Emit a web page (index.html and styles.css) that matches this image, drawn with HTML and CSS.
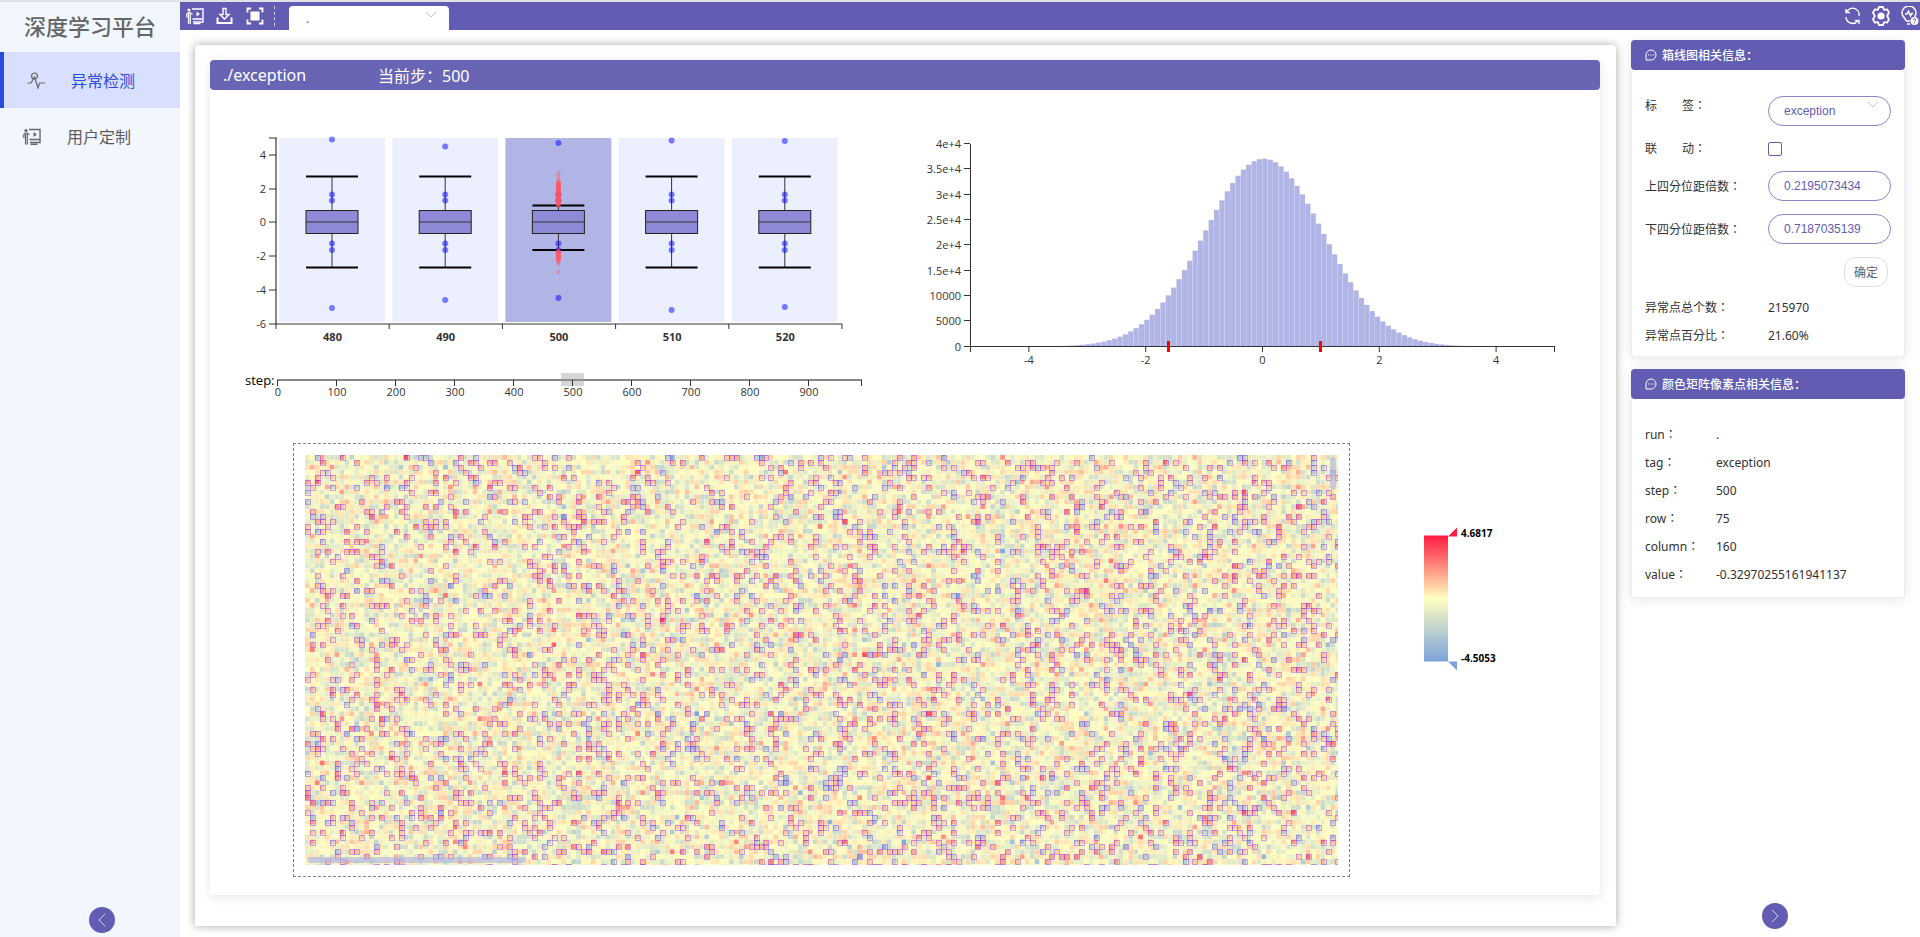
FILE: index.html
```html
<!DOCTYPE html>
<html lang="zh-CN">
<head>
<meta charset="utf-8">
<title>深度学习平台</title>
<link rel="stylesheet" href="styles.css">
</head>
<body>
<svg width="0" height="0" class="defs" aria-hidden="true">
  <symbol id="i-board" viewBox="0 0 18 17" fill="none" stroke="currentColor">
    <circle cx="3" cy="2.500" r="1.600" fill="currentColor" stroke="none"/>
    <path d="M0.800 10V6.500L2.500 5H4l2.500 1.800M2.500 5v11.500M4.300 5v11.500" stroke-width="1.200"/>
    <path d="M6 1.500h11v13H7" stroke-width="1.400"/>
    <path d="M10.500 4v5l3.500-2.500z" fill="currentColor" stroke="none"/>
    <path d="M6.500 11.500h10M7.500 16.200h7" stroke-width="1.400"/>
  </symbol>
  <symbol id="i-comment" viewBox="0 0 12 12" fill="none" stroke="currentColor">
    <path d="M1 11V6a5 5 0 1 1 5 5z"/>
    <path d="M3 6h1.200M5.400 6h1.200M7.800 6h1.200" stroke-width="1.200"/>
  </symbol>
  <symbol id="i-down" viewBox="0 0 12 8" fill="none" stroke="currentColor"><path d="M1 1l5 5 5-5"/></symbol>
</svg>
<div class="app">
  <aside class="sidebar">
    <h1 class="brand">深度学习平台</h1>
    <nav class="menu">
      <a class="menu-item active" href="#detect">
        <svg class="menu-icon" viewBox="0 0 18 17" fill="none" stroke="currentColor" stroke-width="1.200"><circle cx="7.500" cy="4" r="3"/><path d="M0.500 11h3.500l3.500-6 3.500 11 1.500-5H18"/></svg>
        <span>异常检测</span>
      </a>
      <a class="menu-item" href="#custom">
        <svg class="menu-icon"><use href="#i-board"/></svg>
        <span>用户定制</span>
      </a>
    </nav>
    <button class="round" aria-label="收起菜单"><svg viewBox="0 0 26 26"><path d="M16 7l-6 6 6 6"/></svg></button>
  </aside>
  <div class="page">
    <header class="topbar">
      <button class="tool" aria-label="演示"><svg viewBox="0 0 18 17"><use href="#i-board"/></svg></button>
      <button class="tool" aria-label="下载"><svg viewBox="0 0 18 17" fill="none" stroke="currentColor" stroke-width="2"><path d="M1.500 10v5.500h14V10"/><path d="M7 1h3v6h3l-4.500 4.500L4 7h3z" stroke-width="1.400"/></svg></button>
      <button class="tool" aria-label="全屏"><svg viewBox="0 0 18 17" fill="none" stroke="currentColor" stroke-width="1.800"><path d="M1.500 5V1H5M13 1h3.500v4M16.500 12v4H13M5 16H1.500v-4"/><rect x="4.500" y="4" width="9" height="9" fill="currentColor" stroke="none"/></svg></button>
      <span class="divider"></span>
      <div class="run-wrap"><select class="run" aria-label="run"><option>.</option></select><svg class="chev"><use href="#i-down"/></svg></div>
      <div class="spacer"></div>
      <button class="tool right" aria-label="刷新"><svg viewBox="0 0 20 20" fill="none" stroke="currentColor" stroke-width="1.400"><path d="M5 5.500A6.500 6.500 0 0 1 17 10M15.500 15A6.500 6.500 0 0 1 4 11M4 3v3.500h4M17 18v-3.500h-4"/></svg></button>
      <button class="tool right" aria-label="设置"><svg viewBox="0 0 20 20" fill="none" stroke="currentColor" stroke-width="1.800" stroke-linejoin="round"><path d="M8 1h4l1 2.800 3-.5 2 3.200-1.800 3.500 1.800 3.500-2 3.200-3-.5L12 19H8l-1-2.800-3 .5-2-3.200L3.800 10 2 6.500l2-3.200 3 .5z"/><circle cx="10" cy="10" r="3.600" fill="currentColor" stroke="none"/></svg></button>
      <button class="tool right" aria-label="帮助"><svg viewBox="0 0 20 20" fill="none" stroke="currentColor" stroke-width="1.500"><path d="M6 15c0-3-4-3.500-4-8a7 7 0 0 1 14 0c0 2-.8 3-1.500 4M6 15h4M7 18h3"/><path d="M5 8h2l1.500-3 2 5 1.200-2.500h1.500"/><circle cx="14.500" cy="15" r="4" fill="currentColor" stroke="none"/><path d="M13.300 13.800c0-1.600 2.600-1.500 2.400 0-.1.800-1.200.8-1.200 1.800M14.500 16.400v1" stroke="#625db2" stroke-width="1"/></svg></button>
    </header>
    <div class="body">
      <main class="panel">
        <section class="card board">
          <div class="board-head"><span class="path">./exception</span><span>当前步：500</span></div>
          <div class="charts">
            <svg id="box" viewBox="210 90 695 320"></svg>
            <svg id="hist" viewBox="905 90 695 320"></svg>
          </div>
          <div class="matrix-row">
            <div class="matrix">
              <canvas id="matrix" width="1033" height="410"></canvas>
              <span class="bar-v"></span><span class="bar-h"></span>
            </div>
            <svg class="legend" viewBox="1350 443 250 433">
              <defs><linearGradient id="ramp" x1="0" y1="0" x2="0" y2="1"><stop offset="0" stop-color="#ff1a41"/><stop offset=".5" stop-color="#ffffbf"/><stop offset="1" stop-color="#7ba3dc"/></linearGradient></defs>
              <rect x="1424" y="535" width="24" height="126" fill="url(#ramp)"/>
              <path d="M1448 536l9-9v9z" fill="#ff1a41"/><path d="M1448 661h9v9z" fill="#7ba3dc"/>
              <text x="1461" y="536">4.6817</text><text x="1461" y="661">-4.5053</text>
            </svg>
          </div>
        </section>
      </main>
      <aside class="info">
        <section class="card">
          <h2><svg><use href="#i-comment"/></svg>箱线图相关信息：</h2>
          <form class="form">
            <label class="top" for="tag">标<i></i>签：</label>
            <div class="pill-wrap"><select id="tag" class="pill"><option>exception</option></select><svg class="chev"><use href="#i-down"/></svg></div>
            <label for="link">联<i></i>动：</label><input id="link" type="checkbox" class="check">
            <label for="upper">上四分位距倍数：</label><input id="upper" class="pill" value="0.2195073434">
            <label for="lower">下四分位距倍数：</label><input id="lower" class="pill" value="0.7187035139">
            <button type="button" class="ok">确定</button>
          </form>
          <dl class="stats"><dt>异常点总个数：</dt><dd>215970</dd><dt>异常点百分比：</dt><dd>21.60%</dd></dl>
        </section>
        <section class="card">
          <h2><svg><use href="#i-comment"/></svg>颜色矩阵像素点相关信息：</h2>
          <dl class="pixel"><dt>run：</dt><dd>.</dd><dt>tag：</dt><dd>exception</dd><dt>step：</dt><dd>500</dd><dt>row：</dt><dd>75</dd><dt>column：</dt><dd>160</dd><dt>value：</dt><dd>-0.32970255161941137</dd></dl>
        </section>
        <button class="round" aria-label="收起信息"><svg viewBox="0 0 26 26"><path d="M10 7l6 6-6 6"/></svg></button>
      </aside>
    </div>
  </div>
</div>
<script src="charts.js"></script>
</body>
</html>
```

FILE: styles.css
```css
* { box-sizing: border-box; }
body { margin: 0; font-family: "Noto Sans", "Noto Sans CJK SC", sans-serif; font-size: 12px; color: #303133; background: #fff; }
button, select, input { font: inherit; margin: 0; padding: 0; border: 0; background: none; color: inherit; }
select { appearance: none; }
.defs { position: absolute; }
.app { display: flex; min-height: 100vh; border-top: 2px solid #e2e2e4; }
.sidebar { flex: 0 0 180px; display: flex; flex-direction: column; background: #f2f7ff; color: #5c5c5c; }
.brand { margin: 0; height: 50px; line-height: 48px; text-align: center; font-size: 22px; font-weight: 500; color: #666; }
.menu { flex: 1; }
.menu-item { display: flex; align-items: center; height: 56px; padding-left: 23px; gap: 26px; font-size: 16px; color: inherit; text-decoration: none; }
.menu-item.active { border-left: 4px solid #2b4bdd; background: #d9dfff; color: #2b4bdd; }
.menu-icon { width: 18px; height: 17px; color: #666; }
.round { width: 26px; height: 26px; border-radius: 50%; background: #625db2; }
.round svg { display: block; width: 26px; height: 26px; fill: none; stroke: #d5d4ec; }
.sidebar .round { margin: 0 0 4px 89px; }
.page { flex: 1; min-width: 0; display: flex; flex-direction: column; }
.topbar { display: flex; align-items: center; height: 28px; padding: 0 0 0 6px; background: #625db2; color: #fff; }
.tool { width: 18px; height: 20px; margin-right: 12px; }
.tool svg { display: block; width: 18px; height: 18px; }
.divider { height: 20px; border-left: 1px dashed #d5d4ec; margin: 0 14px 0 -2px; }
.run-wrap { position: relative; align-self: flex-end; width: 160px; height: 24px; }
.run { width: 100%; height: 100%; padding-left: 17px; border-radius: 4px 4px 0 0; background: #fff; color: #606266; }
.chev { position: absolute; right: 12px; top: 5px; width: 12px; height: 8px; color: #c0c4cc; pointer-events: none; }
.spacer { flex: 1; }
.tool.right { width: 20px; margin-right: 9px; }
.tool.right svg { width: 20px; height: 20px; }
.tool.right:last-child { margin-right: 0; }
.body { flex: 1; display: flex; }
.panel { flex: 1; min-width: 0; margin: 15px 0 11px 15px; padding: 15px 16px 31px 15px; border-radius: 4px 4px 0 0; box-shadow: 0 0 10px rgba(0, 0, 0, .35); }
.card { border-radius: 4px; background: #fff; box-shadow: 0 2px 12px rgba(0, 0, 0, .1); }
.board { height: 100%; }
.board-head { display: flex; align-items: center; height: 30px; padding-left: 13px; border-radius: 4px; background: #6965b5; color: #fff; font-size: 16px; }
.path { width: 155px; }
.charts { display: grid; grid-template-columns: 1fr 1fr; }
.charts svg { display: block; width: 100%; }
svg text { font-family: "Open Sans", sans-serif; font-size: 11px; fill: #333; }
svg .bold { font-weight: 700; }
svg .step { font-size: 13px; fill: #000; }
.legend text { font-weight: 700; font-size: 10px; fill: #000; }
.matrix-row { display: flex; padding: 33px 0 18px 83px; }
.matrix { position: relative; flex: 1; min-width: 0; padding: 11px; border: 1px dashed #808080; }
.matrix canvas { display: block; width: 100%; }
.legend { flex: 0 0 250px; min-width: 0; }
.bar-v, .bar-h { position: absolute; border-radius: 3px; background: rgba(176, 182, 228, .65); }
.bar-v { right: 13px; top: 13px; width: 6px; height: 33px; }
.bar-h { left: 13px; bottom: 13px; width: 219px; height: 6px; }
.info { flex: 0 0 304px; display: flex; flex-direction: column; padding: 10px 15px 8px; }
.info .card { margin-bottom: 12px; border: 1px solid #ebeef5; border-top: 0; }
.info h2 { display: flex; align-items: center; gap: 5px; height: 30px; margin: 0 -1px; padding-left: 14px; border-radius: 4px; background: #625db2; color: #fff; font-size: 12px; font-weight: 500; }
.info h2 svg { width: 12px; height: 12px; }
.info .round { margin: auto auto 0 131px; }
.form label, dt { font-family: "Noto Sans", "Noto Sans CJK TC", sans-serif; -webkit-locale: "zh-Hant"; }
.form { display: grid; grid-template-columns: 123px 123px; row-gap: 13px; align-items: center; padding: 26px 13px 0; line-height: 19px; }
.form i { display: inline-block; width: 25px; }
.form .top { align-self: start; }
.pill-wrap { position: relative; height: 30px; }
.pill { width: 123px; height: 30px; padding: 0 15px; border: 1px solid #8a86c8; border-radius: 15px; color: #625db2; font-family: "Liberation Sans", sans-serif; }
.check { appearance: none; width: 14px; height: 14px; border: 1px solid #625db2; border-radius: 2px; }
.ok { grid-column: 2; justify-self: end; margin-right: 3px; width: 44px; height: 30px; border: 1px solid #dcdfe6; border-radius: 12px; color: #606266; }
.stats, .pixel { display: grid; margin: 0; }
.stats { grid-template-columns: 123px 1fr; row-gap: 10px; padding: 12px 13px 11px; line-height: 18px; }
.pixel { grid-template-columns: 71px 1fr; padding: 22px 13px 8px; line-height: 28px; }
dd { margin: 0; }
```

FILE: charts.js
```js
const line = (x1, y1, x2, y2, w = 1, c = '#333') => `<path d="M${x1} ${y1}L${x2} ${y2}" stroke="${c}" stroke-width="${w}"/>`;
const text = (x, y, s, a = 'middle', k = '') => `<text x="${x}" y="${y}" text-anchor="${a}" class="${k}">${s}</text>`;
const dot = (x, y, r = 3, c = '#0000ff', o = 0.5) => `<circle cx="${x}" cy="${y}" r="${r}" fill="${c}" opacity="${o}"/>`;
let seed = 20217;
function random() {
  seed = (seed + 0x6D2B79F5) | 0;
  let t = Math.imul(seed ^ (seed >>> 15), 1 | seed);
  t = (t + Math.imul(t ^ (t >>> 7), 61 | t)) ^ t;
  return ((t ^ (t >>> 14)) >>> 0) / 4294967296;
}

function drawBoxes() {
  let s = '';
  const top = [139.5, 146.5, 143, 140.5, 141];
  const bottom = [308, 300, 298, 310, 307];
  for (let i = 0; i < 5; i++) {
    const x = 332 + i * 113.2, on = i === 2;
    const hi = on ? 205.5 : 176.5, lo = on ? 250 : 267.5;
    s += `<rect x="${x - 53}" y="138" width="106" height="184" fill="${on ? '#b0b5e6' : '#ecf0fe'}"/>`;
    s += line(x, hi, x, 210) + line(x, 234, x, lo);
    s += line(x - 26, hi, x + 26, hi, 2, '#000') + line(x - 26, lo, x + 26, lo, 2, '#000');
    s += `<rect x="${x - 26}" y="210.5" width="52" height="23" fill="#8f8ad8" stroke="#222"/>` + line(x - 26, 222, x + 26, 222);
    for (const y of [top[i], 194.5, 200.5, 243.5, 250, bottom[i]]) s += dot(x, y);
    if (on) {
      for (let y = 182; y < 206; y += 1) s += dot(x, y, 2.5, '#ff5560', 0.5);
      for (let y = 251; y < 261; y += 1) s += dot(x, y, 2.5, '#ff5560', 0.5);
      for (const y of [173, 176, 179, 262, 264, 272]) s += dot(x, y, 2, '#ff5560', 0.4);
    }
    s += text(x + 0.5, 341, 480 + i * 10, 'middle', 'bold');
  }
  s += line(276, 138, 276, 324, 2, '#888') + line(275, 324, 842, 324);
  s += line(269, 138, 277, 138);
  for (let v = 4; v >= -6; v -= 2) {
    const y = Math.round(222.3 - v * 16.9);
    s += line(269, y, 276, y) + text(266, y + 4, v, 'end');
  }
  for (let i = 0; i < 6; i++) s += line(276 + i * 113.2, 324, 276 + i * 113.2, 329);
  s += line(277, 380, 862, 380, 2, '#888') + text(245, 385, 'step:', 'start', 'step');
  s += '<rect x="561" y="373" width="23" height="13" fill="#999" opacity=".4"/>';
  for (let i = 0; i < 10; i++) s += line(277.5 + i * 59, 380, 277.5 + i * 59, 386) + text(278 + i * 59, 396, i * 100);
  s += line(861.5, 380, 861.5, 386);
  document.getElementById('box').innerHTML = s;
}

function drawHistogram() {
  const X = v => 1262.5 + v * 58.4, Y = v => 346.5 - v * 0.005062;
  let s = '';
  for (let i = 0; i < 100; i++) {
    const v = -4.5053 + i * 0.09187;
    const n = 37100 * Math.exp(-((v + 0.02) ** 2) / 2.06);
    s += `<rect x="${X(v)}" y="${Y(n)}" width="5.2" height="${346.5 - Y(n)}" fill="#b0b5e6"/>`;
  }
  s += line(970.5, 144, 970.5, 347) + line(970, 346.5, 1555, 346.5) + line(1554.5, 346, 1554.5, 352);
  ['0', '5000', '10000', '1.5e+4', '2e+4', '2.5e+4', '3e+4', '3.5e+4', '4e+4'].forEach((t, i) => {
    const y = Math.round(Y(i * 5000)) - 0.5;
    s += line(964, y, 970, y) + text(961, y + 4, t, 'end');
  });
  s += line(970.5, 346, 970.5, 352);
  for (let v = -4; v <= 4; v += 2) s += line(X(v), 346, X(v), 352) + text(X(v), 364, v);
  for (const x of [1168, 1320]) s += `<rect x="${x - 1}" y="341" width="3" height="11" fill="#f00"/>`;
  document.getElementById('hist').innerHTML = s;
}

function drawMatrix() {
  const g = document.getElementById('matrix').getContext('2d');
  const mid = [255, 255, 191], hot = [255, 26, 65], cold = [123, 163, 220], step = 4.93;
  const marks = [];
  for (let r = 0; r * step < 410; r++) {
    for (let c = 0; c * step < 1033; c++) {
      const z = Math.sqrt(-2 * Math.log(1 - random())) * Math.cos(2 * Math.PI * random());
      const v = z - 0.09, k = Math.min(1, Math.abs(v) / (v > 0 ? 4.6 : 4)), end = v > 0 ? hot : cold;
      g.fillStyle = `rgb(${mid.map((m, i) => Math.round(m + (end[i] - m) * k)).join()})`;
      g.fillRect(c * step, r * step, step - 0.1, step - 0.1);
      if ((z > 1 || z < -1.63) && random() < 0.75) marks.push([c, r]);
    }
  }
  g.strokeStyle = 'rgba(138, 43, 226, .42)';
  for (const [c, r] of marks) g.strokeRect(Math.round(c * step) + 0.5, Math.round(r * step) + 0.5, 5, 5);
}

drawBoxes();
drawHistogram();
drawMatrix();
```
